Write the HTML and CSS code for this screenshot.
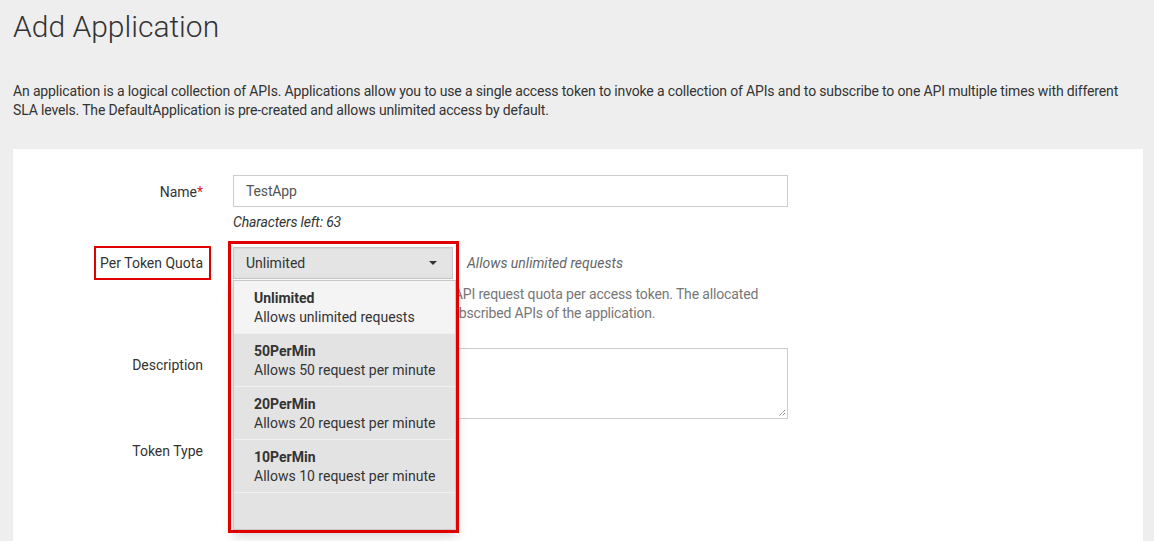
FILE: index.html
```html
<!DOCTYPE html>
<html>
<head>
<meta charset="utf-8">
<link rel="stylesheet" href="styles.css">
</head>
<body>
<div class="page">
  <h1 class="title">Add Application</h1>
  <p class="intro">An application is a logical collection of APIs. Applications allow you to use a single access token to invoke a collection of APIs and to subscribe to one API multiple times with different SLA levels. The DefaultApplication is pre-created and allows unlimited access by default.</p>
  <div class="panel">
    <div class="form">
      <div class="row row-name">
        <label class="label">Name<span class="req">*</span></label>
        <div class="field">
          <div class="input">TestApp</div>
          <div class="chars">Characters left: 63</div>
        </div>
      </div>
      <div class="row row-quota">
        <label class="label"><span class="mark">Per Token Quota</span></label>
        <div class="field">
          <div class="select-line">
            <div class="select-wrap">
              <div class="select"><span>Unlimited</span><span class="caret"></span></div>
              <div class="menu">
                <div class="opt active"><b>Unlimited</b><span>Allows unlimited requests</span></div>
                <div class="opt"><b>50PerMin</b><span>Allows 50 request per minute</span></div>
                <div class="opt"><b>20PerMin</b><span>Allows 20 request per minute</span></div>
                <div class="opt"><b>10PerMin</b><span>Allows 10 request per minute</span></div>
              </div>
              <div class="annot"></div>
            </div>
            <span class="sel-desc">Allows unlimited requests</span>
          </div>
          <p class="help">This feature allows you to assign an API request quota per access token. The allocated quota will be shared among all the subscribed APIs of the application.</p>
        </div>
      </div>
      <div class="row row-desc">
        <label class="label">Description</label>
        <div class="field">
          <div class="textarea"><svg class="grip" width="9" height="9" viewBox="0 0 9 9"><path d="M8 2 L2 8 M8 5 L5 8" stroke="#555" stroke-width="1" stroke-dasharray="1 1"/></svg></div>
        </div>
      </div>
      <div class="row row-token">
        <label class="label">Token Type</label>
        <div class="field"></div>
      </div>
    </div>
  </div>
</div>
</body>
</html>
```
FILE: styles.css
```css
html, body {
  margin: 0;
  padding: 0;
  background: #eeeeee;
  height: 100%;
  overflow: hidden;
}
body {
  font-family: Roboto, "Liberation Sans", sans-serif;
  font-size: 14px;
  letter-spacing: -0.15px;
  color: #333;
}
.page {
  padding: 0 11px 0 13px;
}
.title {
  margin: 0;
  padding-top: 7px;
  font-size: 30px;
  font-weight: 300;
  line-height: 40px;
  letter-spacing: 0;
  color: #333;
}
.intro {
  margin: 35px 0 0;
  line-height: 19px;
  color: #333;
  font-weight: 400;
}
.panel {
  margin-top: 29px;
  background: #fff;
  height: 420px;
  padding-top: 26px;
}
.row {
  display: grid;
  grid-template-columns: 190px 555px;
  column-gap: 30px;
}
.label {
  text-align: right;
  padding-top: 7px;
  line-height: 20px;
  letter-spacing: 0;
  color: #333;
}
.req { color: #e02020; }
.input {
  height: 30px;
  border: 1px solid #ccc;
  line-height: 30px;
  padding: 0 12px;
  color: #555;
}
.chars {
  margin-top: 5px;
  font-style: italic;
  line-height: 20px;
  color: #333;
}
.row-quota { margin-top: 14px; }
.row-quota .label { padding-top: 0; }
.mark {
  display: inline-block;
  border: 2px solid #e00000;
  padding: 5px 6px 5px 4px;
  line-height: 20px;
  margin-right: -8px;
}
.select-line {
  display: flex;
  align-items: center;
  gap: 14px;
  margin-top: 1px;
}
.select-wrap {
  position: relative;
  width: 220px;
}
.select {
  height: 30px;
  border: 1px solid #c8c8c8;
  background: #e4e4e4;
  display: flex;
  align-items: center;
  justify-content: space-between;
  padding: 0 12px;
  color: #333;
  letter-spacing: 0;
  box-shadow: inset 0 1px 1px rgba(0,0,0,0.05);
}
.caret {
  width: 0;
  height: 0;
  border-left: 4px solid transparent;
  border-right: 4px solid transparent;
  border-top: 4px solid #333;
  margin-right: 3px;
}
.menu {
  position: absolute;
  left: 0;
  top: 33px;
  width: 221px;
  height: 248px;
  background: #e3e3e3;
  border: 1px solid #c8c8c8;
  box-shadow: 0 6px 12px rgba(0,0,0,0.18);
  z-index: 2;
}
.opt {
  display: flex;
  flex-direction: column;
  padding: 8px 20px 6px;
  line-height: 19px;
  white-space: nowrap;
  letter-spacing: 0;
  border-bottom: 1px solid #f0f0f0;
  color: #333;
}
.opt b { font-weight: 700; color: #333; }
.opt.active { background: #f4f4f4; }
.annot {
  position: absolute;
  left: -5px;
  top: -6px;
  width: 225px;
  height: 286px;
  border: 3px solid #e00000;
  z-index: 3;
  pointer-events: none;
}
.sel-desc {
  font-style: italic;
  letter-spacing: 0;
  color: #666;
}
.help {
  margin: 6px 0 0;
  line-height: 19px;
  color: #777;
  width: 540px;
}
.row-desc { margin-top: 25px; }
.textarea {
  position: relative;
  height: 69px;
  border: 1px solid #ccc;
}
.grip {
  position: absolute;
  right: 1px;
  bottom: 1px;
}
.row-token { margin-top: 15px; }
```
